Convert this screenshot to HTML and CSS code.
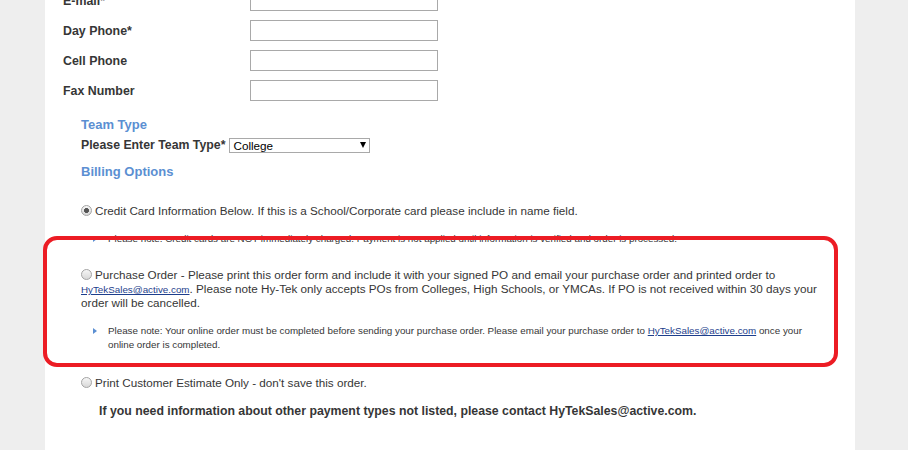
FILE: index.html
```html
<!DOCTYPE html>
<html lang="en">

<head>
  <meta charset="utf-8" />
  <meta name="viewport" content="width=device-width, initial-scale=1" />

  <title>Order Form - Billing</title>

  <link rel="stylesheet" href="styles.css">
</head>

<body>
  <div id="panel">
    <div class="contact">
      <div class="field">
        <label>E-mail*</label>
        <input type="text" />
      </div>
      <div class="field">
        <label>Day Phone*</label>
        <input type="text" />
      </div>
      <div class="field">
        <label>Cell Phone</label>
        <input type="text" />
      </div>
      <div class="field">
        <label>Fax Number</label>
        <input type="text" />
      </div>
    </div>

    <div class="section">
      <h3 class="team-title">Team Type</h3>
      <div class="team-row">
        <label>Please Enter Team Type*</label>
        <span class="select-wrap">
          <select>
            <option>College</option>
            <option>High School</option>
            <option>YMCA</option>
            <option>Club</option>
          </select>
        </span>
      </div>

      <h3 class="billing-title">Billing Options</h3>

      <div class="option opt-card"><input type="radio" name="billing" checked />Credit Card Information Below. If this is a School/Corporate card please include in name field.</div>
      <div class="note note-card">
        <span>Please note: Credit cards are NOT immediately charged. Payment is not applied until information is verified and order is processed.</span>
      </div>

      <div class="option opt-po"><input type="radio" name="billing" />Purchase Order - Please print this order form and include it with your signed PO and email your purchase order and printed order to <a href="mailto:HyTekSales@active.com">HyTekSales@active.com</a>. Please note Hy-Tek only accepts POs from Colleges, High Schools, or YMCAs. If PO is not received within 30 days your order will be cancelled.</div>
      <div class="note note-po">
        <span>Please note: Your online order must be completed before sending your purchase order. Please email your purchase order to <a href="mailto:HyTekSales@active.com">HyTekSales@active.com</a> once your online order is completed.</span>
      </div>

      <div class="option opt-estimate"><input type="radio" name="billing" />Print Customer Estimate Only - don't save this order.</div>

      <p class="other">If you need information about other payment types not listed, please contact HyTekSales@active.com.</p>
    </div>
  </div>

  <!-- highlight drawn over the purchase order option -->
  <div class="highlight"></div>
</body>

</html>
```

FILE: styles.css
```css
body {
  margin: 0;
  background-color: #eeeeee;
  font-family: "Liberation Sans", Arial, sans-serif;
  color: #363636;
  overflow: hidden;
}

#panel {
  display: flow-root;
  margin-left: 45px;
  width: 810px;
  min-height: 450px;
  background-color: #fff;
}

.contact {
  margin-top: -10px;
  padding-left: 18px;
}

.field {
  display: flex;
  align-items: center;
  margin-bottom: 9px;
}

.field label {
  width: 187px;
  font-size: 12.4px;
  font-weight: bold;
}

.field input {
  box-sizing: border-box;
  width: 188px;
  height: 21px;
  margin: 0;
  border: 1px solid #a9a9a9;
  background: #fff;
}

.section {
  padding: 0 35px 0 36px;
}

.section h3 {
  margin: 0;
  font-size: 13px;
  line-height: 16px;
  font-weight: bold;
  color: #5b8fd2;
}

.team-title {
  padding-top: 7px;
}

.team-row {
  display: flex;
  align-items: center;
  gap: 4px;
  height: 15px;
  margin-top: 5px;
}

.team-row label {
  font-size: 12.3px;
  font-weight: bold;
  line-height: 15px;
}

.select-wrap {
  position: relative;
  display: block;
  height: 15px;
}

.select-wrap select {
  -webkit-appearance: none;
  appearance: none;
  box-sizing: border-box;
  display: block;
  width: 141px;
  height: 15px;
  margin: 0;
  padding: 0 0 0 3px;
  border: 1px solid #a9a9a9;
  border-radius: 0;
  background: #fff;
  color: #000;
  font-family: "Liberation Sans", Arial, sans-serif;
  font-size: 11.7px;
  line-height: 13px;
}

.select-wrap::after {
  content: "";
  position: absolute;
  right: 4px;
  top: 4px;
  border-top: 6px solid #000;
  border-left: 3.5px solid transparent;
  border-right: 3.5px solid transparent;
  pointer-events: none;
}

.billing-title {
  margin-top: 11px !important;
}

.option {
  font-size: 11.7px;
  line-height: 14px;
}

.option input[type="radio"] {
  -webkit-appearance: none;
  appearance: none;
  box-sizing: border-box;
  width: 11px;
  height: 11px;
  margin: 0 3px 0 0;
  border: 1px solid #a4a4a4;
  border-radius: 50%;
  background: linear-gradient(#f6f6f6, #d8d8d8);
  vertical-align: -1px;
}

.option input[type="radio"]:checked {
  background:
    radial-gradient(circle, #555 0 2.2px, transparent 2.8px),
    linear-gradient(#f6f6f6, #d8d8d8);
}

.option a,
.note a {
  color: #1d3e8c;
  font-size: 9.8px;
  line-height: 1;
}

.opt-card {
  margin-top: 24px;
}

.opt-po {
  margin-top: 22px;
}

.opt-estimate {
  margin-top: 24px;
}

.note {
  display: flex;
  align-items: flex-start;
  margin-top: 14px;
  padding-left: 12px;
  font-size: 9.8px;
  line-height: 14px;
}

.note::before {
  content: "";
  flex: none;
  margin: 3.5px 11px 0 0;
  border-left: 4px solid #5b8fd2;
  border-top: 3.5px solid transparent;
  border-bottom: 3.5px solid transparent;
}

.other {
  margin: 13px 0 0;
  padding-left: 18px;
  font-size: 12.3px;
  line-height: 16px;
  font-weight: bold;
}

.highlight {
  position: absolute;
  left: 43px;
  top: 236px;
  width: 795px;
  height: 131px;
  box-sizing: border-box;
  border: 4.5px solid #ec1c24;
  border-radius: 14px;
  pointer-events: none;
}
```
